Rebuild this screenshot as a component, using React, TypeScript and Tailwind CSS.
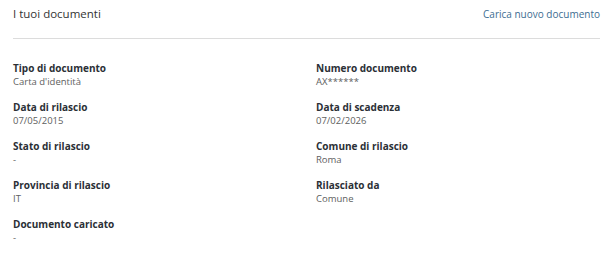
import React from 'react';

type Field = { label: string; value: string };

const fields: Field[] = [
  { label: 'Tipo di documento', value: "Carta d'identità" },
  { label: 'Numero documento', value: 'AX******' },
  { label: 'Data di rilascio', value: '07/05/2015' },
  { label: 'Data di scadenza', value: '07/02/2026' },
  { label: 'Stato di rilascio', value: '-' },
  { label: 'Comune di rilascio', value: 'Roma' },
  { label: 'Provincia di rilascio', value: 'IT' },
  { label: 'Rilasciato da', value: 'Comune' },
  { label: 'Documento caricato', value: '-' },
];

const App: React.FC = () => {
  return (
    <div className="w-[610px] h-[258px] bg-white pl-[13px] pr-[10px] font-['Open_Sans',sans-serif]">
      <div className="flex items-center justify-between pt-[6px] pb-[16px] border-b border-[#dcdcdc]">
        <h2 className="text-[11.5px] leading-[16px] text-[#333]">I tuoi documenti</h2>
        <a href="#" className="text-[10px] leading-[16px] text-[#3d6d91]">
          Carica nuovo documento
        </a>
      </div>

      <div className="grid grid-cols-2 gap-x-[19px] gap-y-[11px] pt-[22px]">
        {fields.map((f) => (
          <div key={f.label}>
            <div className="text-[10px] leading-[14px] font-bold text-[#2b3036]">{f.label}</div>
            <div className="text-[9.5px] leading-[14px] text-[#606060]">{f.value}</div>
          </div>
        ))}
      </div>
    </div>
  );
};

export default App;
